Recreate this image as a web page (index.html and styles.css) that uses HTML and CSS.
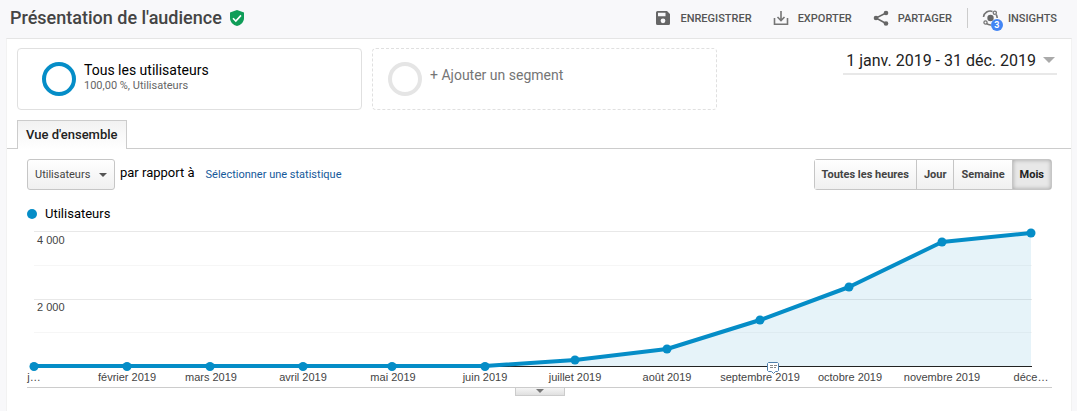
FILE: index.html
```
<!DOCTYPE html>
<html lang="fr">
<head>
	<meta charset="utf-8">
	<title>Présentation de l'audience</title>
	<link rel="stylesheet" href="styles.css">
</head>
<body>
	<header class="topbar">
		<h1 class="title">Présentation de l'audience</h1>
		<svg class="shield" width="14" height="16" viewBox="0 0 14 16">
			<path d="M7 0 14 2.500v5.500c0 4-3 7-7 8-4-1-7-4-7-8V2.500z" fill="#0f9d58"/>
			<path d="M3 8.200 5.800 11 11 5.400" fill="none" stroke="#fff" stroke-width="1.600"/>
		</svg>
		<div class="actions">
			<button class="action" type="button">
				<svg width="20" height="20" viewBox="0 0 20 20"><path d="M14 3H4.500A1.500 1.500 0 0 0 3 4.500v11A1.500 1.500 0 0 0 4.500 17h11a1.500 1.500 0 0 0 1.500-1.500V6zm-4 12.200a2.400 2.400 0 1 1 0-4.800 2.400 2.400 0 0 1 0 4.800zm2.500-7H5V4.800h7.500z"/></svg>
				Enregistrer
			</button>
			<button class="action" type="button">
				<svg width="20" height="20" viewBox="0 0 20 20"><path d="M3.500 10v6.200h13V10M10 3v9M6.500 9l3.500 3.500L13.500 9" fill="none" stroke="#757575" stroke-width="1.600"/></svg>
				Exporter
			</button>
			<button class="action" type="button">
				<svg width="20" height="20" viewBox="0 0 20 20"><path d="M15 5 5 10l10 5.500" fill="none" stroke="#666" stroke-width="1.500"/><circle cx="15" cy="5" r="2.300"/><circle cx="5" cy="10" r="2.300"/><circle cx="15" cy="15.500" r="2.300"/></svg>
				Partager
			</button>
			<button class="action insights" type="button">
				<span class="insights-icon">
					<svg width="20" height="20" viewBox="0 0 20 20">
						<path d="M2.500 9A6.800 6.800 0 0 1 11.500 3.400M15.200 6.500A7 7 0 0 1 16.200 10M5.500 15.700A7 7 0 0 0 10 17" fill="none" stroke="#757575" stroke-width="1.600"/>
						<circle cx="9.500" cy="10" r="3.200"/>
						<circle cx="13.800" cy="4.800" r="1.600" fill="none" stroke="#757575" stroke-width="1.300"/>
						<circle cx="4.500" cy="14.500" r="1.600" fill="none" stroke="#757575" stroke-width="1.300"/>
					</svg>
					<span class="badge">3</span>
				</span>
				Insights
			</button>
		</div>
	</header>

	<main class="panel">
		<div class="segments">
			<button class="segment" type="button">
				<span class="ring"></span>
				<span class="segment-text">
					<span class="segment-name">Tous les utilisateurs</span>
					<span class="segment-detail">100,00 %, Utilisateurs</span>
				</span>
			</button>
			<button class="segment segment-add" type="button">
				<span class="ring"></span>
				<span class="segment-text">+ Ajouter un segment</span>
			</button>
			<button class="date-range" type="button">1 janv. 2019 - 31 déc. 2019</button>
		</div>

		<nav class="tabs">
			<a class="tab" href="#overview">Vue d'ensemble</a>
		</nav>

		<section class="overview" id="overview">
			<div class="toolbar">
				<span class="metric">
					<select id="metric" class="metric-select">
						<option>Utilisateurs</option>
					</select>
				</span>
				<label class="versus" for="metric">par rapport à</label>
				<a class="pick" href="#metric">Sélectionner une statistique</a>
				<div class="periods">
					<button class="period" type="button">Toutes les heures</button>
					<button class="period" type="button">Jour</button>
					<button class="period" type="button">Semaine</button>
					<button class="period active" type="button" aria-pressed="true">Mois</button>
				</div>
			</div>

			<div class="legend">Utilisateurs</div>

			<svg class="chart" viewBox="0 0 1025 159">
				<g class="grid">
					<path d="M7 3.500h998M7 71.500h998"/>
					<path class="minor" d="M7 37.500h998M7 104.500h998"/>
				</g>
				<path class="area" d="M7 138H458L548 132 640 121 733 92 822 59 915 14 1004 5V138z"/>
				<path class="axis" d="M7 138.500h998"/>
				<path class="line" d="M7 138H458L548 132 640 121 733 92 822 59 915 14 1004 5"/>
				<g class="dots">
					<circle cx="7" cy="138.500" r="4.500"/>
					<circle cx="100" cy="138.500" r="4.500"/>
					<circle cx="183" cy="138.500" r="4.500"/>
					<circle cx="276" cy="138.500" r="4.500"/>
					<circle cx="365" cy="138.500" r="4.500"/>
					<circle cx="458" cy="138.500" r="4.500"/>
					<circle cx="548" cy="132" r="4.500"/>
					<circle cx="640" cy="121" r="4.500"/>
					<circle cx="733" cy="92" r="4.500"/>
					<circle cx="822" cy="59" r="4.500"/>
					<circle cx="915" cy="14" r="4.500"/>
					<circle cx="1004" cy="5" r="4.500"/>
				</g>
				<path class="note" d="M741.500 134.500h9l1 1v7l-1 1h-2l-2 2-2-2h-3l-1-1v-7z"/>
				<path class="note-lines" d="M743 137.500h3m1 0h3M743 139.500h3m1 0h2"/>
				<g class="labels">
					<text x="10" y="16">4 000</text>
					<text x="10" y="83">2 000</text>
					<g text-anchor="middle">
						<text x="7" y="153">j…</text>
						<text x="100" y="153">février 2019</text>
						<text x="184" y="153">mars 2019</text>
						<text x="276" y="153">avril 2019</text>
						<text x="366" y="153">mai 2019</text>
						<text x="458" y="153">juin 2019</text>
						<text x="548" y="153">juillet 2019</text>
						<text x="640" y="153">août 2019</text>
						<text x="733" y="153">septembre 2019</text>
						<text x="823" y="153">octobre 2019</text>
						<text x="915" y="153">novembre 2019</text>
						<text x="1004" y="153">déce…</text>
					</g>
				</g>
			</svg>
			<div class="drawer">
				<button class="drawer-toggle" type="button" aria-label="Annotations"></button>
			</div>
		</section>
	</main>
</body>
</html>
```
FILE: styles.css
```
* {
	box-sizing: border-box;
}

body {
	background-color: #f8f8fa;
	color: #222;
	display: flex;
	flex-direction: column;
	font-family: Roboto, sans-serif;
	font-size: 13px;
	margin: 0;
	min-height: 100vh;
}

button,
select {
	background: none;
	border: 0;
	color: inherit;
	font-family: inherit;
	margin: 0;
	padding: 0;
}

a {
	text-decoration: none;
}

/* Header */
.topbar {
	align-items: center;
	display: flex;
	height: 38px;
	padding: 0 20px 2px 10px;
}

.title {
	color: #444;
	font-size: 18px;
	font-weight: 500;
	margin: 0 8px 2px 0;
}

.actions {
	display: flex;
	margin-left: auto;
}

.action {
	align-items: center;
	color: #555;
	display: flex;
	font-size: 11px;
	font-weight: 500;
	gap: 7px;
	margin-left: 19px;
	text-transform: uppercase;
}

.action svg {
	display: block;
	fill: #666;
}

.insights {
	border-left: 1px solid #ccc;
	margin-left: 15px;
	padding-left: 13px;
}

.insights-icon {
	position: relative;
}

.badge {
	background-color: #4285f4;
	border-radius: 50%;
	color: #fff;
	font-size: 9px;
	font-weight: 700;
	height: 12px;
	left: 10px;
	line-height: 12px;
	position: absolute;
	top: 11px;
	width: 12px;
}

/* Segments */
.panel {
	background-color: #fff;
	border: 1px solid #e5e5e5;
	border-bottom: 0;
	border-color: #e5e5e5 #f2f2f2;
	flex: 1;
	margin: 0 5px 0 6px;
}

.segments {
	align-items: flex-start;
	display: flex;
	gap: 10px;
	padding: 9px 14px 10px 10px;
}

.segment {
	align-items: center;
	border: 1px solid #e0e0e0;
	border-radius: 4px;
	display: flex;
	flex: 0 1 345px;
	gap: 8px;
	height: 62px;
	padding-left: 24px;
	text-align: left;
}

.ring {
	border: 4px solid #058dc7;
	border-radius: 50%;
	height: 34px;
	width: 34px;
}

.segment-text {
	padding-bottom: 4px;
}

.segment-name,
.segment-detail {
	display: block;
}

.segment-name {
	color: #000;
	font-size: 14px;
	line-height: 18px;
}

.segment-detail {
	color: #666;
	font-size: 11px;
	line-height: 14px;
}

.segment-add {
	border-style: dashed;
	color: #757575;
	font-size: 14px;
	padding-left: 15px;
}

.segment-add .ring {
	border-color: #e5e5e5;
}

.segment-add .segment-text {
	padding-bottom: 8px;
}

.date-range {
	align-items: center;
	border-bottom: 2px solid #e8e8e8;
	color: #222;
	display: flex;
	font-size: 16px;
	gap: 7px;
	height: 27px;
	margin-left: auto;
	padding: 0 2px 1px 3px;
}

.date-range::after {
	border: 6px solid transparent;
	border-bottom: 0;
	border-top-color: #aaa;
	content: "";
}

/* Tabs */
.tabs {
	border-bottom: 1px solid #ccc;
	display: flex;
	padding-left: 10px;
}

.tab {
	background: linear-gradient(#f2f2f2, #fff);
	border: 1px solid #ccc;
	border-bottom: 0;
	color: #222;
	font-weight: 500;
	line-height: 28px;
	margin-bottom: -1px;
	padding: 0 8px;
}

/* Overview */
.overview {
	padding: 10px 19px 0 20px;
}

.toolbar {
	align-items: center;
	display: flex;
}

.metric {
	align-items: center;
	background: linear-gradient(#fff, #f0f0f0);
	border: 1px solid #c6c6c6;
	border-radius: 3px;
	display: flex;
	height: 31px;
	position: relative;
}

.metric-select {
	appearance: none;
	color: #444;
	font-size: 11px;
	height: 28px;
	padding: 0 23px 0 7px;
}

.metric::after {
	border: 4px solid transparent;
	border-bottom: 0;
	border-top-color: #555;
	content: "";
	pointer-events: none;
	position: absolute;
	right: 7px;
}

.versus {
	color: #000;
	padding: 0 11px 4px 5px;
}

.pick {
	color: #15599a;
	font-size: 11px;
}

.periods {
	border: 1px solid #c6c6c6;
	border-radius: 3px;
	display: flex;
	margin-left: auto;
}

.period {
	background: linear-gradient(#fff, #f0f0f0);
	border-left: 1px solid #c6c6c6;
	color: #444;
	font-size: 11px;
	font-weight: 700;
	height: 29px;
	padding: 0 7px;
}

.period:first-child {
	border-left: 0;
}

.period.active {
	background: #e8e8e8;
	box-shadow: inset 0 0 4px rgba(0, 0, 0, 0.3);
	color: #222;
}

.legend {
	align-items: center;
	color: #000;
	display: flex;
	gap: 8px;
	line-height: 16px;
	margin: 16px 0 6px;
}

.legend::before {
	background-color: #058dc7;
	border-radius: 50%;
	content: "";
	height: 10px;
	width: 10px;
}

/* Chart */
.chart {
	display: block;
	overflow: visible;
	width: 100%;
}

.grid path {
	stroke: #e8e8e8;
}

.grid .minor {
	stroke: #f6f6f6;
}

.area {
	fill: #058dc7;
	fill-opacity: 0.1;
}

.axis {
	stroke: #222;
}

.line {
	fill: none;
	stroke: #058dc7;
	stroke-linejoin: round;
	stroke-width: 4px;
}

.dots {
	fill: #058dc7;
}

.note {
	fill: #fff;
	stroke: #4f7fab;
}

.note-lines {
	stroke: #888;
}

.labels {
	fill: #444;
	font-family: "Liberation Sans", Arial, sans-serif;
	font-size: 11px;
}

.drawer {
	border-top: 1px solid #ccc;
	display: flex;
	justify-content: center;
}

.drawer-toggle {
	background: linear-gradient(#f5f5f5, #e0e0e0);
	border: 1px solid #ccc;
	border-top: 0;
	display: flex;
	height: 8px;
	justify-content: center;
	width: 50px;
}

.drawer-toggle::after {
	border: 4px solid transparent;
	border-bottom: 0;
	border-top-color: #777;
	content: "";
	margin-top: 1px;
}
```
